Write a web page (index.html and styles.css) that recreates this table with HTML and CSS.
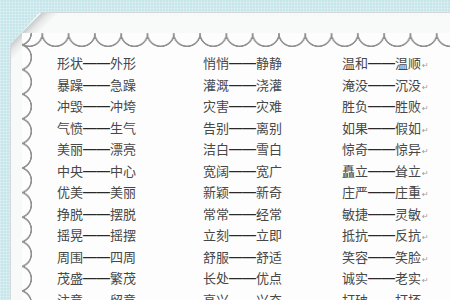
FILE: index.html
```html
<!DOCTYPE html>
<html lang="zh-CN">
<head>
<meta charset="utf-8">
<link rel="stylesheet" href="styles.css">
</head>
<body>
<div class="page">
  <div class="card">
    <div class="stamp">
      <div class="words">
        <div class="col">
          <span>形状<b>——</b>外形</span>
          <span>暴躁<b>——</b>急躁</span>
          <span>冲毁<b>——</b>冲垮</span>
          <span>气愤<b>——</b>生气</span>
          <span>美丽<b>——</b>漂亮</span>
          <span>中央<b>——</b>中心</span>
          <span>优美<b>——</b>美丽</span>
          <span>挣脱<b>——</b>摆脱</span>
          <span>摇晃<b>——</b>摇摆</span>
          <span>周围<b>——</b>四周</span>
          <span>茂盛<b>——</b>繁茂</span>
          <span>注意<b>——</b>留意</span>
        </div>
        <div class="col">
          <span>悄悄<b>——</b>静静</span>
          <span>灌溉<b>——</b>浇灌</span>
          <span>灾害<b>——</b>灾难</span>
          <span>告别<b>——</b>离别</span>
          <span>洁白<b>——</b>雪白</span>
          <span>宽阔<b>——</b>宽广</span>
          <span>新颖<b>——</b>新奇</span>
          <span>常常<b>——</b>经常</span>
          <span>立刻<b>——</b>立即</span>
          <span>舒服<b>——</b>舒适</span>
          <span>长处<b>——</b>优点</span>
          <span>高兴<b>——</b>兴奋</span>
        </div>
        <div class="col ret">
          <span>温和<b>——</b>温顺<i>↵</i></span>
          <span>淹没<b>——</b>沉没<i>↵</i></span>
          <span>胜负<b>——</b>胜败<i>↵</i></span>
          <span>如果<b>——</b>假如<i>↵</i></span>
          <span>惊奇<b>——</b>惊异<i>↵</i></span>
          <span>矗立<b>——</b>耸立<i>↵</i></span>
          <span>庄严<b>——</b>庄重<i>↵</i></span>
          <span>敏捷<b>——</b>灵敏<i>↵</i></span>
          <span>抵抗<b>——</b>反抗<i>↵</i></span>
          <span>笑容<b>——</b>笑脸<i>↵</i></span>
          <span>诚实<b>——</b>老实<i>↵</i></span>
          <span>打破<b>——</b>打坏<i>↵</i></span>
        </div>
      </div>
    </div>
  </div>
</div>
</body>
</html>
```
FILE: styles.css
```css
html, body {
  margin: 0;
  padding: 0;
}
body {
  width: 450px;
  height: 300px;
  overflow: hidden;
}
.page {
  width: 450px;
  height: 300px;
  overflow: hidden;
  background-color: #c4e5ea;
  background-image:
    repeating-linear-gradient(0deg, rgba(255,255,255,0.28) 0 1px, transparent 1px 3px),
    repeating-linear-gradient(90deg, rgba(255,255,255,0.28) 0 1px, transparent 1px 3px);
  padding: 12px 0 0 10px;
  box-sizing: border-box;
}
.card {
  width: 460px;
  height: 320px;
  background-color: #f8f9f9;
  background-image:
    linear-gradient(135deg, transparent 0 21px, #c9cdcd 22px, #e6e8e8 27px, rgba(248,249,249,0) 34px);
  background-size: 60px 60px;
  background-repeat: no-repeat;
  border-top: 1px solid #d3d7d7;
  border-left: 1px solid #d3d7d7;
  clip-path: polygon(30px 0, 100% 0, 100% 100%, 0 100%, 0 33px);
  padding: 20px 0 0 11px;
  box-sizing: border-box;
}
.stamp {
  height: 100%;
  background-color: #fdfdfd;
  background-image:
    radial-gradient(circle at 50% 0, transparent 12.2px, #909090 12.8px, #909090 13.8px, transparent 14.4px),
    radial-gradient(circle at -3.5px 50%, transparent 11.7px, #909090 12.3px, #909090 13.3px, transparent 13.9px);
  background-size: 26.3px 15px, 12px 24.6px;
  background-repeat: repeat-x, repeat-y;
  background-position: -6px 0, 0 12px;
  padding: 19px 0 0 35px;
  box-sizing: border-box;
}
.words {
  display: grid;
  grid-template-columns: 146px 139px 120px;
  font-family: "Noto Sans CJK SC", sans-serif;
  font-size: 13px;
  color: #474747;
}
.col {
  display: flex;
  flex-direction: column;
}
.col span {
  display: block;
  height: 21.5px;
  line-height: 21.5px;
  white-space: nowrap;
}
.col b {
  font-family: "Liberation Sans", sans-serif;
  font-weight: 700;
  font-size: 13.5px;
  color: #2a2a2a;
  vertical-align: 1px;
}
.col i {
  font-style: normal;
  font-family: "DejaVu Sans", sans-serif;
  font-size: 8px;
  color: #9a9a9a;
  margin-left: 1px;
}
```
